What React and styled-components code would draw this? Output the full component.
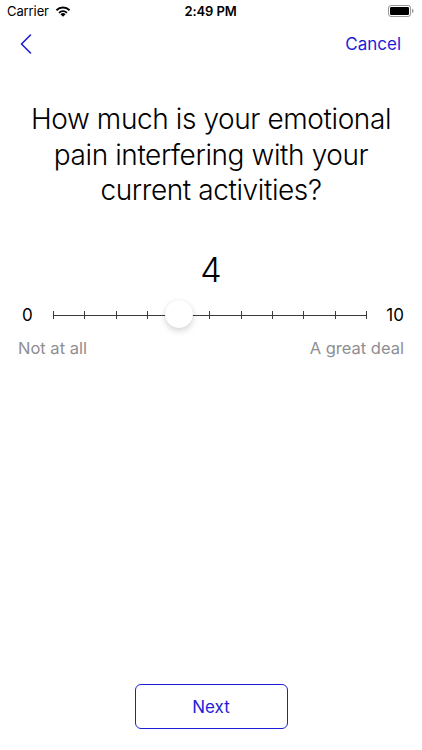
import React, { useState } from "react";
import styled, { createGlobalStyle } from "styled-components";

const GlobalStyle = createGlobalStyle`
  html, body {
    margin: 0;
    padding: 0;
    background: #ffffff;
  }
  body {
    font-family: Inter, "Noto Sans", sans-serif;
    -webkit-font-smoothing: antialiased;
  }
`;

const BLUE = "#1e1ed8";

const Screen = styled.div`
  width: 422px;
  height: 750px;
  display: flex;
  flex-direction: column;
  background: #fff;
  overflow: hidden;
`;

const StatusBar = styled.div`
  height: 22px;
  display: grid;
  grid-template-columns: 1fr auto 1fr;
  align-items: center;
  padding: 0 8px 0 7px;
  font-size: 13px;
  color: #000;
`;

const Carrier = styled.div`
  display: flex;
  align-items: center;
  gap: 6px;
  letter-spacing: -0.1px;
`;

const Clock = styled.div`
  font-weight: 600;
  letter-spacing: -0.1px;
`;

const Battery = styled.div`
  justify-self: end;
  display: flex;
  align-items: center;
`;

const NavBar = styled.div`
  height: 44px;
  display: flex;
  align-items: center;
  justify-content: space-between;
  padding: 0 21px 0 19px;
`;

const IconButton = styled.button`
  border: none;
  background: none;
  padding: 0;
  display: flex;
  align-items: center;
  cursor: pointer;
`;

const TextButton = styled.button`
  border: none;
  background: none;
  padding: 0;
  font-family: inherit;
  font-size: 17px;
  color: ${BLUE};
  cursor: pointer;
`;

const Question = styled.h1`
  margin: 36px 20px 0;
  font-size: 28px;
  font-weight: 300;
  line-height: 35.5px;
  text-align: center;
  color: #000;
  letter-spacing: -0.4px;
`;

const Value = styled.div`
  margin-top: 41px;
  font-size: 34px;
  font-weight: 300;
  line-height: 40px;
  text-align: center;
  color: #000;
`;

const SliderRow = styled.div`
  margin-top: 10px;
  height: 30px;
  display: flex;
  align-items: center;
  padding: 0 18px 0 22px;
  font-size: 17px;
  color: #000;
`;

const EndLabel = styled.span`
  width: ${(p) => p.$w}px;
  text-align: ${(p) => p.$align};
  font-weight: 400;
`;

const Track = styled.div`
  position: relative;
  flex: 1;
  height: 30px;
  margin: 0 ${(p) => p.$right}px 0 ${(p) => p.$left}px;
  display: flex;
  align-items: center;
  justify-content: space-between;
  cursor: pointer;

  &::before {
    content: "";
    position: absolute;
    left: 0;
    right: 0;
    top: 50%;
    height: 1px;
    background: #3a3a3a;
  }
`;

const Tick = styled.span`
  width: 1px;
  height: 8px;
  background: #3a3a3a;
  position: relative;
`;

const Thumb = styled.span`
  position: absolute;
  top: 50%;
  width: 28px;
  height: 28px;
  margin: -15px 0 0 -14px;
  border-radius: 50%;
  background: #fff;
  box-shadow: 0 3px 6px rgba(0, 0, 0, 0.16), 0 0 1px rgba(0, 0, 0, 0.12);
`;

const Captions = styled.div`
  margin-top: 8px;
  display: flex;
  justify-content: space-between;
  padding: 0 18px;
  font-size: 16.5px;
  line-height: 20px;
  color: #8e8e93;
`;

const Spacer = styled.div`
  flex: 1;
`;

const Footer = styled.div`
  display: flex;
  justify-content: center;
  padding-bottom: 21px;
`;

const NextButton = styled.button`
  width: 153px;
  height: 45px;
  border: 1.5px solid ${BLUE};
  border-radius: 6px;
  background: #fff;
  font-family: inherit;
  font-size: 17px;
  color: ${BLUE};
  cursor: pointer;
`;

function Wifi() {
  return (
    <svg width="16" height="12" viewBox="0 0 16 12">
      <path d="M8 11.8 L5.4 9.2 A3.7 3.7 0 0 1 10.6 9.2 Z" fill="#000" />
      <path d="M3.4 7.2 A6.5 6.5 0 0 1 12.6 7.2 L11.3 8.5 A4.6 4.6 0 0 0 4.7 8.5 Z" fill="#000" />
      <path d="M0.8 4.6 A10.2 10.2 0 0 1 15.2 4.6 L13.9 5.9 A8.4 8.4 0 0 0 2.1 5.9 Z" fill="#000" />
    </svg>
  );
}

function BatteryIcon() {
  return (
    <svg width="26" height="12" viewBox="0 0 26 12">
      <rect x="0.5" y="0.5" width="22" height="11" rx="2.5" fill="none" stroke="#999" />
      <rect x="2" y="2" width="19" height="8" rx="1.2" fill="#000" />
      <path d="M24 4 v4 a1.6 2 0 0 0 0 -4 z" fill="#999" />
    </svg>
  );
}

function Chevron() {
  return (
    <svg width="14" height="22" viewBox="0 0 14 22">
      <path d="M11.5 2 L2.5 11 L11.5 20" fill="none" stroke={BLUE} strokeWidth="1.6" strokeLinecap="round" strokeLinejoin="round" />
    </svg>
  );
}

export default function App() {
  const [value, setValue] = useState(4);
  const min = 0;
  const max = 10;
  const ticks = Array.from({ length: max - min + 1 }, (_, i) => i);

  const handleTrack = (e) => {
    const rect = e.currentTarget.getBoundingClientRect();
    const ratio = (e.clientX - rect.left) / rect.width;
    setValue(Math.max(min, Math.min(max, Math.round(ratio * (max - min)))));
  };

  return (
    <>
      <GlobalStyle />
      <Screen>
        <StatusBar>
          <Carrier>
            Carrier <Wifi />
          </Carrier>
          <Clock>2:49 PM</Clock>
          <Battery>
            <BatteryIcon />
          </Battery>
        </StatusBar>

        <NavBar>
          <IconButton aria-label="Back">
            <Chevron />
          </IconButton>
          <TextButton>Cancel</TextButton>
        </NavBar>

        <Question>
          How much is your emotional pain interfering with your current activities?
        </Question>

        <Value>{value}</Value>

        <SliderRow>
          <EndLabel $w={10} $align="left">0</EndLabel>
          <Track $left={21} $right={18} onClick={handleTrack}>
            {ticks.map((t) => (
              <Tick key={t} />
            ))}
            <Thumb style={{ left: `${((value - min) / (max - min)) * 100}%` }} />
          </Track>
          <EndLabel $w={19} $align="right">10</EndLabel>
        </SliderRow>

        <Captions>
          <span>Not at all</span>
          <span>A great deal</span>
        </Captions>

        <Spacer />

        <Footer>
          <NextButton>Next</NextButton>
        </Footer>
      </Screen>
    </>
  );
}
